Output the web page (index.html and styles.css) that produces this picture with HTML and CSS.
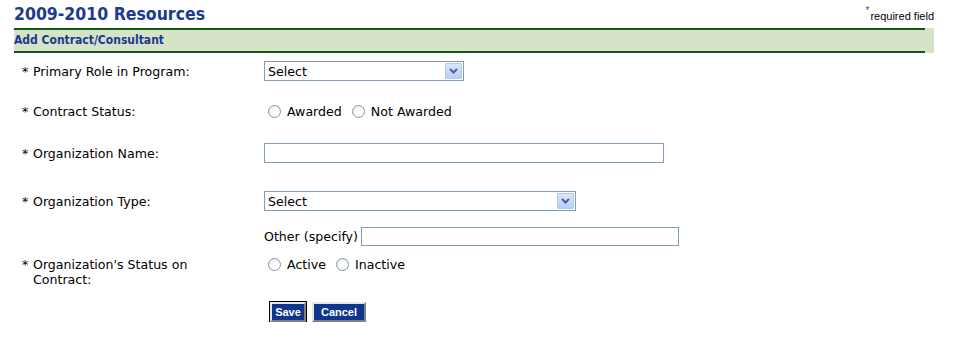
FILE: index.html
```html
<!DOCTYPE html>
<html lang="en">
<head>
    <meta charset="UTF-8">
    <meta name="viewport" content="width=device-width, initial-scale=1.0">
    <title>2009-2010 Resources</title>
    <link rel="stylesheet" href="styles.css">
</head>
<body>
    <div class="page">
        <div class="title-row">
            <h1>2009-2010 Resources</h1>
            <span class="req-note"><sup>*</sup>required field</span>
        </div>
        <div class="bar">Add Contract/Consultant</div>

        <form class="form">
            <div class="row row-role">
                <label class="lbl"><span class="star">*</span><span>Primary Role in Program:</span></label>
                <div class="field">
                    <div class="select-wrap w200">
                        <select><option>Select</option></select>
                        <span class="arrow"><svg width="9" height="6" viewBox="0 0 9 6"><path d="M1 1 L4.5 4.5 L8 1" fill="none" stroke="#4d6185" stroke-width="2"/></svg></span>
                    </div>
                </div>
            </div>

            <div class="row row-contract">
                <label class="lbl"><span class="star">*</span><span>Contract Status:</span></label>
                <div class="field radios">
                    <label><input type="radio" name="cs"> Awarded</label>
                    <label><input type="radio" name="cs"> Not Awarded</label>
                </div>
            </div>

            <div class="row row-name">
                <label class="lbl"><span class="star">*</span><span>Organization Name:</span></label>
                <div class="field"><input type="text" class="text w400"></div>
            </div>

            <div class="row row-type">
                <label class="lbl"><span class="star">*</span><span>Organization Type:</span></label>
                <div class="field">
                    <div class="select-wrap w312">
                        <select><option>Select</option></select>
                        <span class="arrow"><svg width="9" height="6" viewBox="0 0 9 6"><path d="M1 1 L4.5 4.5 L8 1" fill="none" stroke="#4d6185" stroke-width="2"/></svg></span>
                    </div>
                </div>
            </div>

            <div class="row row-other">
                <span class="lbl"></span>
                <div class="field other">Other (specify) <input type="text" class="text w318"></div>
            </div>

            <div class="row row-status">
                <label class="lbl"><span class="star">*</span><span>Organization's Status on Contract:</span></label>
                <div class="field radios">
                    <label><input type="radio" name="st"> Active</label>
                    <label><input type="radio" name="st"> Inactive</label>
                </div>
            </div>

            <div class="row row-buttons">
                <span class="lbl"></span>
                <div class="field buttons">
                    <button type="button" class="btn btn-save">Save</button>
                    <button type="button" class="btn btn-cancel">Cancel</button>
                </div>
            </div>
        </form>
    </div>
</body>
</html>
```

FILE: styles.css
```css
body {
    margin: 0;
    padding: 0;
    background: #fff;
    font-family: "DejaVu Sans", Verdana, sans-serif;
    font-size: 12.6px;
    color: #000;
}
.page {
    width: 920px;
    margin-left: 14px;
}
.title-row {
    display: flex;
    justify-content: space-between;
    align-items: flex-start;
    height: 28px;
}
h1 {
    margin: 3px 0 0 0;
    font-family: "DejaVu Sans Condensed", "DejaVu Sans", sans-serif;
    font-size: 17.5px;
    line-height: 22px;
    color: #1c3a8e;
    font-weight: bold;
}
.req-note {
    font-family: "Liberation Sans", Arial, sans-serif;
    font-size: 11px;
    margin-top: 10px;
    color: #000;
}
.req-note sup {
    color: #1c5aa8;
    font-size: 10px;
    vertical-align: 6px;
    line-height: 0;
    margin-right: 1px;
}
.bar {
    height: 25px;
    box-sizing: border-box;
    padding: 5px 0 0 0;
    font-family: "DejaVu Sans Condensed", "DejaVu Sans", sans-serif;
    font-weight: bold;
    font-size: 12px;
    color: #1c3a8e;
    background:
        linear-gradient(#0d5c0d, #0d5c0d) top left / 911px 2px no-repeat,
        linear-gradient(#0d5c0d, #0d5c0d) bottom left / 911px 2px no-repeat,
        #d6e3c9;
}
.form {
    padding-left: 8px;
}
.row {
    display: grid;
    grid-template-columns: 242px 1fr;
    align-items: center;
}
.row-role { margin-top: 8px; }
.row-contract { margin-top: 20px; }
.row-name { margin-top: 22px; }
.row-type { margin-top: 28px; }
.row-other { margin-top: 16px; }
.row-status { margin-top: 11px; align-items: start; }
.row-buttons { margin-top: 15px; }
.lbl {
    display: flex;
    width: 205px;
    line-height: 15px;
}
.star {
    width: 11px;
    flex-shrink: 0;
}
.field {
    display: flex;
    align-items: center;
}
.select-wrap {
    position: relative;
    height: 20px;
}
.select-wrap select {
    appearance: none;
    -webkit-appearance: none;
    width: 100%;
    height: 20px;
    box-sizing: border-box;
    border: 1px solid #7f9db9;
    border-radius: 0;
    background: #fff;
    font-family: "DejaVu Sans", Verdana, sans-serif;
    font-size: 12.6px;
    padding: 0 0 0 3px;
    color: #000;
    margin: 0;
}
.arrow {
    position: absolute;
    right: 2px;
    top: 2px;
    width: 15px;
    height: 14px;
    border: 1px solid #b4c8f2;
    border-radius: 1px;
    background: linear-gradient(#dbe6fd, #b9cdfb);
    display: flex;
    align-items: center;
    justify-content: center;
}
.w200 { width: 200px; }
.w312 { width: 312px; }
.w400 { width: 400px; }
.w318 { width: 318px; }
.text {
    height: 20px;
    box-sizing: border-box;
    border: 1px solid #7f9db9;
    margin: 0;
    padding: 0 2px;
    font-size: 12px;
}
.other {
    height: 19px;
}
.other .text {
    height: 19px;
    margin-left: 3px;
}
.radios {
    height: 20px;
    gap: 6px;
}
.row-status .radios {
    height: 15px;
}
.radios label {
    display: flex;
    align-items: center;
}
.radios input {
    appearance: none;
    -webkit-appearance: none;
    width: 13px;
    height: 13px;
    margin: 0 6px 0 4px;
    border: 1px solid #8595a8;
    border-radius: 50%;
    box-sizing: border-box;
    background: radial-gradient(circle at 60% 60%, #ffffff 30%, #e4e4df 100%);
}
.buttons {
    padding-left: 6px;
    gap: 6px;
}
.btn {
    height: 20px;
    padding: 0;
    font-family: "Liberation Sans", Arial, sans-serif;
    font-weight: bold;
    font-size: 11px;
    color: #fff;
    background: #0f358f;
    border: 2px solid;
    border-color: #e8e6e1 #808080 #808080 #e8e6e1;
    cursor: pointer;
}
.btn-save {
    width: 36px;
    outline: 1px solid #000;
}
.btn-cancel {
    width: 54px;
}
```
